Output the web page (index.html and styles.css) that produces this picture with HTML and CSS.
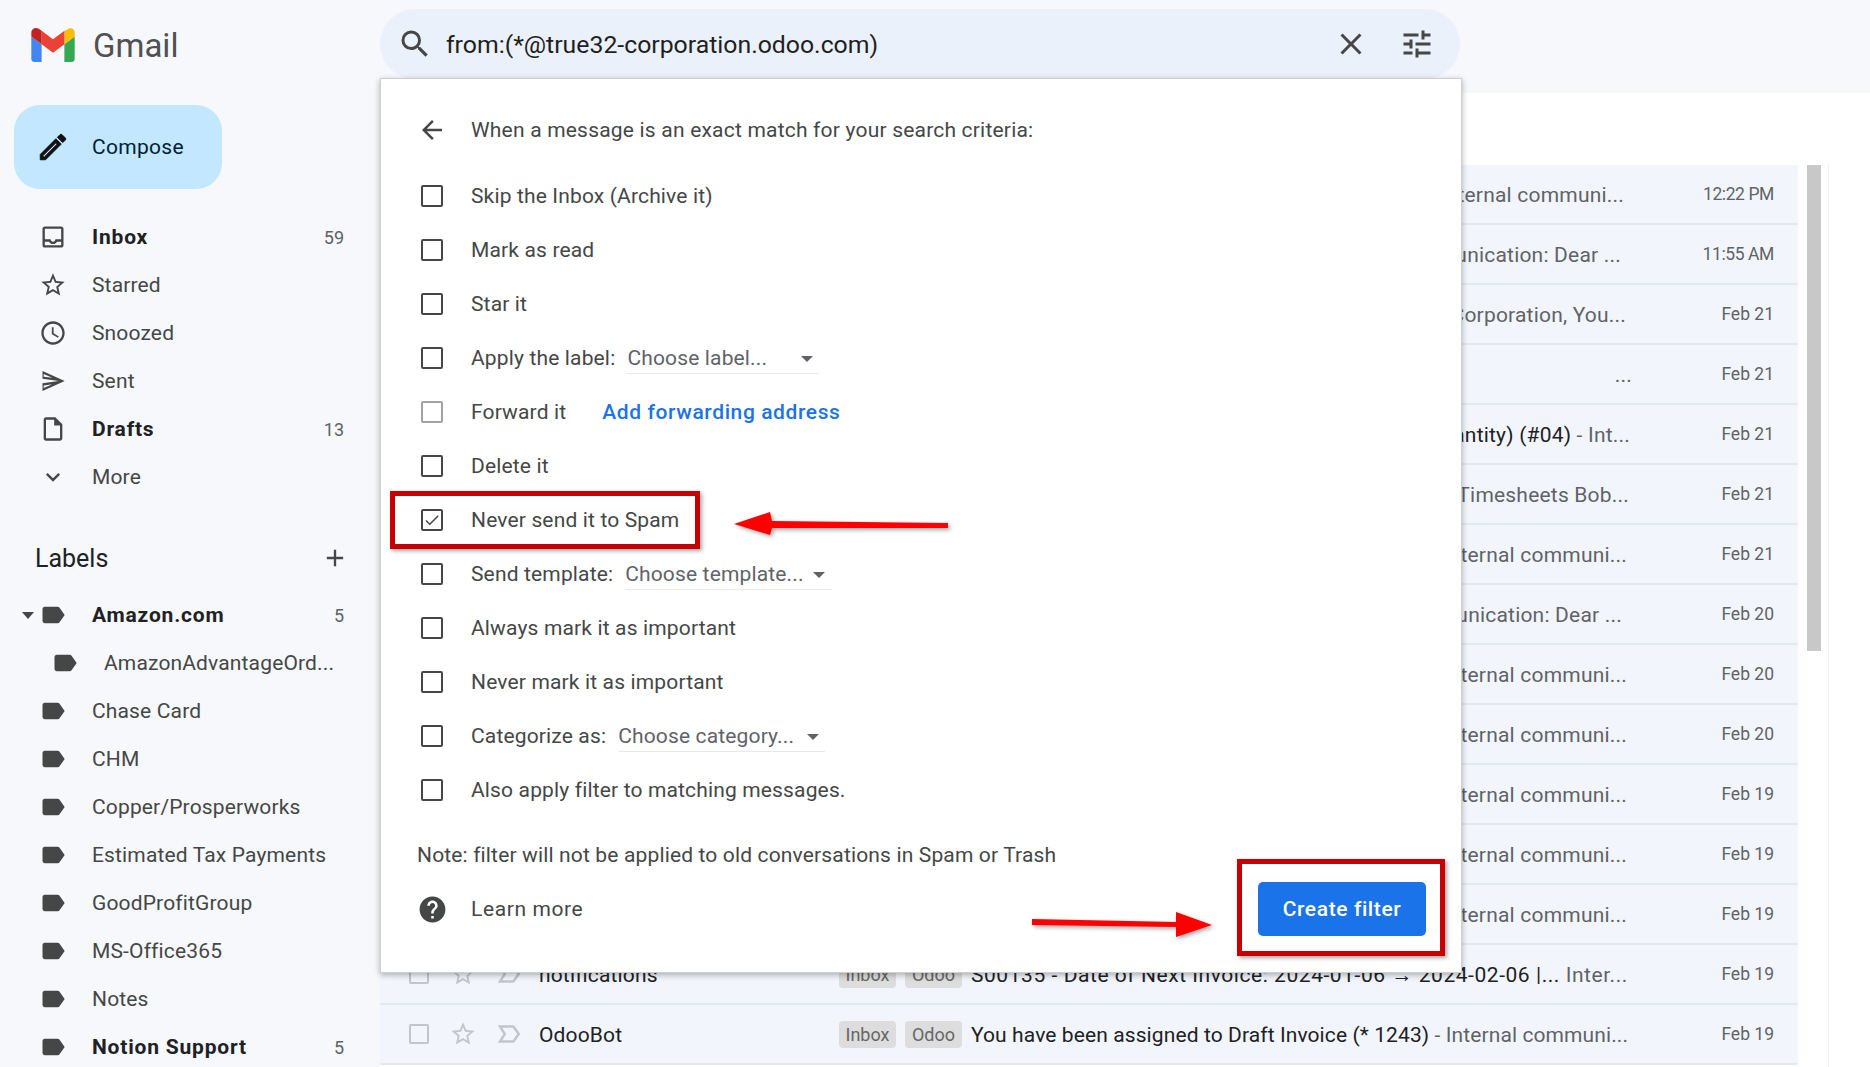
FILE: index.html
```html
<!DOCTYPE html>
<html lang="en">
<head>
  <meta charset="UTF-8">
  <title>Gmail - Create filter</title>
  <link rel="stylesheet" href="styles.css">
</head>
<body>
  <svg class="sprite" aria-hidden="true">
    <symbol id="i-search" viewBox="0 0 24 24"><path d="M15.5 14h-.79l-.28-.27A6.471 6.471 0 0 0 16 9.5 6.5 6.5 0 1 0 9.5 16c1.61 0 3.09-.59 4.23-1.57l.27.28v.79l5 4.99L20.49 19l-4.99-5zm-6 0C7.01 14 5 11.99 5 9.5S7.01 5 9.5 5 14 7.01 14 9.5 11.99 14 9.5 14z"/></symbol>
    <symbol id="i-close" viewBox="0 0 24 24"><path d="M19 6.41 17.59 5 12 10.59 6.41 5 5 6.41 10.59 12 5 17.59 6.41 19 12 13.41 17.59 19 19 17.59 13.41 12z"/></symbol>
    <symbol id="i-tune" viewBox="0 0 24 24"><path d="M3 17v2h6v-2H3zM3 5v2h10V5H3zm10 16v-2h8v-2h-8v-2h-2v6h2zM7 9v2H3v2h4v2h2V9H7zm14 4v-2H11v2h10zm-6-4h2V7h4V5h-4V3h-2v6z"/></symbol>
    <symbol id="i-back" viewBox="0 0 24 24"><path d="M20 11H7.83l5.59-5.59L12 4l-8 8 8 8 1.41-1.41L7.83 13H20v-2z"/></symbol>
    <symbol id="i-edit" viewBox="0 0 24 24"><path d="M3 17.25V21h3.75L17.81 9.94l-3.75-3.75L3 17.25zM5.92 19H5v-.92l9.06-9.06.92.92L5.92 19zM20.71 7.04a1 1 0 0 0 0-1.41l-2.34-2.34a1 1 0 0 0-1.41 0l-1.83 1.83 3.75 3.75 1.83-1.83z"/></symbol>
    <symbol id="i-inbox" viewBox="0 0 24 24"><path d="M19 3H5c-1.1 0-2 .9-2 2v14c0 1.1.9 2 2 2h14c1.1 0 2-.9 2-2V5c0-1.1-.9-2-2-2zm0 16H5v-3h3.56c.69 1.19 1.97 2 3.45 2s2.75-.81 3.45-2H19v3zm0-5h-4.99c0 1.1-.9 2-2 2s-2-.9-2-2H5V5h14v9z"/></symbol>
    <symbol id="i-star" viewBox="0 0 24 24"><path d="M22 9.24l-7.19-.62L12 2 9.19 8.63 2 9.24l5.46 4.73L5.82 21 12 17.27 18.18 21l-1.63-7.03L22 9.24zM12 15.4l-3.76 2.27 1-4.28-3.32-2.88 4.38-.38L12 6.1l1.71 4.04 4.38.38-3.32 2.88 1 4.28L12 15.4z"/></symbol>
    <symbol id="i-clock" viewBox="0 0 24 24"><path d="M11.99 2C6.47 2 2 6.48 2 12s4.47 10 9.99 10C17.52 22 22 17.52 22 12S17.52 2 11.99 2zM12 20c-4.42 0-8-3.58-8-8s3.58-8 8-8 8 3.58 8 8-3.58 8-8 8zm.5-13H11v6l5.25 3.15.75-1.23-4.5-2.67z"/></symbol>
    <symbol id="i-sent" viewBox="0 0 24 24"><path d="M4 6.03l7.51 3.22-7.52-1 .01-2.22m7.5 8.72L4 17.97v-2.22l7.51-1M3 3.5V10l14 2-14 2v6.5L22 12 3 3.5z"/></symbol>
    <symbol id="i-draft" viewBox="0 0 24 24"><path d="M14 2H6c-1.1 0-1.99.9-1.99 2L4 20c0 1.1.89 2 1.99 2H18c1.1 0 2-.9 2-2V8l-6-6zm4 18H6V4h7v5h5v11z"/></symbol>
    <symbol id="i-more" viewBox="0 0 24 24"><path d="M16.59 8.59 12 13.17 7.41 8.59 6 10l6 6 6-6z"/></symbol>
    <symbol id="i-label" viewBox="0 0 24 24"><path d="M17.63 5.84C17.27 5.33 16.67 5 16 5L5 5.01C3.9 5.01 3 5.9 3 7v10c0 1.1.9 1.99 2 1.99L16 19c.67 0 1.27-.33 1.63-.84L22 12l-4.37-6.16z"/></symbol>
    <symbol id="i-add" viewBox="0 0 24 24"><path d="M19 13h-6v6h-2v-6H5v-2h6V5h2v6h6v2z"/></symbol>
    <symbol id="i-help" viewBox="0 0 24 24"><path d="M12 2C6.48 2 2 6.48 2 12s4.48 10 10 10 10-4.48 10-10S17.52 2 12 2zm1 17h-2v-2h2v2zm2.07-7.75l-.9.92C13.45 12.9 13 13.5 13 15h-2v-.5c0-1.1.45-2.1 1.17-2.83l1.24-1.26c.37-.36.59-.86.59-1.41 0-1.1-.9-2-2-2s-2 .9-2 2H8c0-2.21 1.79-4 4-4s4 1.79 4 4c0 .88-.36 1.68-.93 2.25z"/></symbol>
    <symbol id="i-important" viewBox="0 0 24 24"><path d="M15 19H3l4.5-7L3 5h12c.65 0 1.26.31 1.63.84L21 12l-4.37 6.16c-.37.52-.98.84-1.63.84zm-8.39-2H15l3.55-5L15 7H6.61l3.21 5-3.21 5z"/></symbol>
  </svg>

  <div class="app">
    <aside class="sidebar">
      <div class="brand">
        <svg class="brand-logo" viewBox="0 0 52 42">
          <path fill="#4285f4" d="M3.636 42h8.727V20.727L0 11.455v26.909C0 40.375 1.627 42 3.636 42z"/>
          <path fill="#34a853" d="M39.636 42h8.727c2.012 0 3.636-1.63 3.636-3.636V11.455l-12.364 9.273z"/>
          <path fill="#fbbc04" d="M39.636 4.636v16.09L52 11.456V6.545c0-4.5-5.14-7.07-8.727-3.373z"/>
          <path fill="#ea4335" d="M12.364 20.727V4.636L26 14.818l13.636-10.18v16.09L26 30.909z"/>
          <path fill="#c5221f" d="M0 6.545v4.91l12.364 9.272V4.636L8.91 2.182C5.31-.518 0 2.05 0 6.545"/>
        </svg>
        <span class="brand-name">Gmail</span>
      </div>

      <button class="compose"><svg class="icon"><use href="#i-edit"/></svg>Compose</button>

      <ul class="nav">
        <li class="nav-item bold"><svg class="icon"><use href="#i-inbox"/></svg><span class="nav-name">Inbox</span><span class="count">59</span></li>
        <li class="nav-item"><svg class="icon"><use href="#i-star"/></svg><span class="nav-name">Starred</span></li>
        <li class="nav-item"><svg class="icon"><use href="#i-clock"/></svg><span class="nav-name">Snoozed</span></li>
        <li class="nav-item"><svg class="icon"><use href="#i-sent"/></svg><span class="nav-name">Sent</span></li>
        <li class="nav-item bold"><svg class="icon"><use href="#i-draft"/></svg><span class="nav-name">Drafts</span><span class="count">13</span></li>
        <li class="nav-item"><svg class="icon"><use href="#i-more"/></svg><span class="nav-name">More</span></li>
      </ul>

      <div class="labels-head"><span>Labels</span><svg class="icon"><use href="#i-add"/></svg></div>

      <ul class="nav">
        <li class="nav-item bold caret"><svg class="icon"><use href="#i-label"/></svg><span class="nav-name">Amazon.com</span><span class="count">5</span></li>
        <li class="nav-item sub"><svg class="icon"><use href="#i-label"/></svg><span class="nav-name">AmazonAdvantageOrd...</span></li>
        <li class="nav-item"><svg class="icon"><use href="#i-label"/></svg><span class="nav-name">Chase Card</span></li>
        <li class="nav-item"><svg class="icon"><use href="#i-label"/></svg><span class="nav-name">CHM</span></li>
        <li class="nav-item"><svg class="icon"><use href="#i-label"/></svg><span class="nav-name">Copper/Prosperworks</span></li>
        <li class="nav-item"><svg class="icon"><use href="#i-label"/></svg><span class="nav-name">Estimated Tax Payments</span></li>
        <li class="nav-item"><svg class="icon"><use href="#i-label"/></svg><span class="nav-name">GoodProfitGroup</span></li>
        <li class="nav-item"><svg class="icon"><use href="#i-label"/></svg><span class="nav-name">MS-Office365</span></li>
        <li class="nav-item"><svg class="icon"><use href="#i-label"/></svg><span class="nav-name">Notes</span></li>
        <li class="nav-item bold"><svg class="icon"><use href="#i-label"/></svg><span class="nav-name">Notion Support</span><span class="count">5</span></li>
      </ul>
    </aside>

    <main class="main">
      <header class="topbar">
        <div class="search">
          <svg class="search-icon"><use href="#i-search"/></svg>
          <span class="search-text">from:(*@true32-corporation.odoo.com)</span>
          <svg class="clear-icon"><use href="#i-close"/></svg>
          <svg class="tune-icon"><use href="#i-tune"/></svg>
        </div>
      </header>

      <div class="content">
        <div class="list">
          <div class="mail"><div class="snippet">Internal communi...</div><div class="date time">12:22 PM</div></div>
          <div class="mail"><div class="snippet">Internal communication: Dear ...</div><div class="date time">11:55 AM</div></div>
          <div class="mail"><div class="snippet">True32 Corporation, You...</div><div class="date">Feb 21</div></div>
          <div class="mail"><div class="snippet">...</div><div class="date">Feb 21</div></div>
          <div class="mail"><div class="snippet"><span class="subject">Quantity) (#04)</span> - Int...</div><div class="date">Feb 21</div></div>
          <div class="mail"><div class="snippet">Timesheets Bob...</div><div class="date">Feb 21</div></div>
          <div class="mail"><div class="snippet">Internal communi...</div><div class="date">Feb 21</div></div>
          <div class="mail"><div class="snippet">Internal communication: Dear ...</div><div class="date">Feb 20</div></div>
          <div class="mail"><div class="snippet">Internal communi...</div><div class="date">Feb 20</div></div>
          <div class="mail"><div class="snippet">Internal communi...</div><div class="date">Feb 20</div></div>
          <div class="mail"><div class="snippet">Internal communi...</div><div class="date">Feb 19</div></div>
          <div class="mail"><div class="snippet">Internal communi...</div><div class="date">Feb 19</div></div>
          <div class="mail"><div class="snippet">Internal communi...</div><div class="date">Feb 19</div></div>
          <div class="mail full">
            <span class="mail-check"></span>
            <svg class="mail-star"><use href="#i-star"/></svg>
            <svg class="mail-imp"><use href="#i-important"/></svg>
            <span class="sender">notifications</span>
            <span class="chip">Inbox</span><span class="chip">Odoo</span>
            <div class="line wide"><span class="subject">S00135 - Date of Next Invoice: 2024-01-06 → 2024-02-06 |...</span> Inter...</div>
            <div class="date">Feb 19</div>
          </div>
          <div class="mail full">
            <span class="mail-check"></span>
            <svg class="mail-star"><use href="#i-star"/></svg>
            <svg class="mail-imp"><use href="#i-important"/></svg>
            <span class="sender">OdooBot</span>
            <span class="chip">Inbox</span><span class="chip">Odoo</span>
            <div class="line"><span class="subject">You have been assigned to Draft Invoice (* 1243)</span> - Internal communi...</div>
            <div class="date">Feb 19</div>
          </div>
        </div>
        <div class="scroll"><div class="scroll-thumb"></div></div>
      </div>
    </main>
  </div>

  <div class="dialog">
    <div class="dialog-head"><svg class="back"><use href="#i-back"/></svg>When a message is an exact match for your search criteria:</div>
    <div class="options">
      <div class="opt"><span class="check"></span>Skip the Inbox (Archive it)</div>
      <div class="opt"><span class="check"></span>Mark as read</div>
      <div class="opt"><span class="check"></span>Star it</div>
      <div class="opt"><span class="check"></span>Apply the label:<span class="pick pick-label">Choose label...</span></div>
      <div class="opt"><span class="check off"></span>Forward it<a class="link">Add forwarding address</a></div>
      <div class="opt"><span class="check"></span>Delete it</div>
      <div class="opt"><span class="check"><svg viewBox="0 0 24 24"><path d="M9 16.2 4.8 12l-1.4 1.4L9 19 21 7l-1.4-1.4z"/></svg></span>Never send it to Spam</div>
      <div class="opt"><span class="check"></span>Send template:<span class="pick pick-template">Choose template...</span></div>
      <div class="opt"><span class="check"></span>Always mark it as important</div>
      <div class="opt"><span class="check"></span>Never mark it as important</div>
      <div class="opt"><span class="check"></span>Categorize as:<span class="pick pick-category">Choose category...</span></div>
      <div class="opt"><span class="check"></span>Also apply filter to matching messages.</div>
    </div>
    <div class="note">Note: filter will not be applied to old conversations in Spam or Trash</div>
    <div class="dialog-foot">
      <svg class="help"><use href="#i-help"/></svg>
      <span class="learn">Learn more</span>
      <button class="create">Create filter</button>
    </div>
  </div>

  <!-- red annotations drawn on top of the screenshot -->
  <div class="mark mark-spam"></div>
  <div class="mark mark-create"></div>
  <svg class="arrow arrow-left" viewBox="0 0 220 30"><path d="M0 14 36 2 38 11 214 13 214 18 38 18 36 25z"/></svg>
  <svg class="arrow arrow-right" viewBox="0 0 184 30"><path d="M0 7 144 10 144 0 180 13 144 25 144 15 0 13z"/></svg>
</body>
</html>
```

FILE: styles.css
```css
* { box-sizing: border-box; }
html, body { margin: 0; height: 100%; overflow: hidden; }
body { font-family: Roboto, "Liberation Sans", sans-serif; font-size: 21px; letter-spacing: .15px; color: #444746; background: #f6f8fc; }
ul { list-style: none; margin: 0; padding: 0; }
.sprite { display: none; }
.icon { width: 28px; height: 28px; fill: #444746; flex: none; }

.app { display: flex; height: 1067px; }

/* sidebar */
.sidebar { width: 380px; flex: none; padding-left: 14px; overflow: hidden; }
.brand { display: flex; align-items: center; height: 90px; padding-left: 17px; padding-bottom: 2px; }
.brand-name { margin-left: 18px; padding-top: 2px; font-size: 33px; letter-spacing: 0; color: #4f5154; }
.brand-logo { width: 44px; height: 35px; }
.compose { display: flex; align-items: center; width: 208px; height: 84px; margin-top: 15px; padding: 0 0 0 22px; border: 0; border-radius: 26px; background: #c2e7ff; font: inherit; letter-spacing: .3px; color: #001d35; }
.compose .icon { width: 34px; height: 34px; fill: #111; stroke: #111; stroke-width: .7; margin-right: 22px; }
.compose + .nav { margin-top: 24px; }
.nav-item { display: flex; align-items: center; height: 48px; padding-left: 25px; padding-right: 36px; position: relative; }
.nav-name { margin-left: 25px; flex: 1; white-space: nowrap; }
.bold .nav-name { font-weight: 700; letter-spacing: .8px; color: #202124; }
.count { font-size: 18px; letter-spacing: 0; color: #5f6368; }
.nav-item.sub { padding-left: 37px; }
.nav-item.caret::before { content: ""; position: absolute; left: 8px; top: 21px; border: 6px solid transparent; border-top: 7px solid #444746; border-bottom: 0; }
.labels-head { display: flex; align-items: center; justify-content: space-between; height: 48px; margin-top: 33px; margin-bottom: 9px; padding: 0 31px 0 21px; font-size: 25px; letter-spacing: 0; color: #202124; }

/* main column */
.main { flex: 1; display: flex; flex-direction: column; min-width: 0; }
.topbar { height: 93px; flex: none; padding-top: 9px; }
.search { display: flex; align-items: center; width: 1080px; height: 70px; padding: 0 25px 0 17px; border-radius: 35px; background: #eaf1fb; }
.search-icon { width: 36px; height: 36px; fill: #444746; flex: none; }
.search-text { margin-left: 13px; flex: 1; padding-top: 1px; font-size: 24.8px; letter-spacing: 0; color: #1f1f1f; }
.clear-icon { width: 36px; height: 36px; fill: #444746; margin-right: 30px; }
.tune-icon { width: 36px; height: 36px; fill: #444746; }
.content { flex: 1; display: flex; background: #fff; padding-top: 72px; }
.list { width: 1418px; flex: none; }
.scroll { width: 22px; margin-left: 9px; height: 902px; border-right: 1px solid #eceff3; }
.scroll-thumb { width: 14px; height: 486px; background: #c8c8c8; }

/* mail rows, only the part past the dialog shows for most of them */
.mail { display: flex; align-items: center; height: 60px; background: #f2f6fc; border-bottom: 2px solid #e4e8ef; color: #5f6368; }
.snippet { flex: 1; padding-top: 2px; padding-right: 41px; text-align: right; white-space: nowrap; letter-spacing: .2px; }
.mail:nth-child(1) .snippet { padding-right: 44px; }
.mail:nth-child(2) .snippet { padding-right: 47px; }
.mail:nth-child(3) .snippet { padding-right: 42px; }
.mail:nth-child(4) .snippet { padding-right: 36px; }
.mail:nth-child(5) .snippet { padding-right: 38px; }
.mail:nth-child(6) .snippet { padding-right: 39px; }
.mail:nth-child(8) .snippet { padding-right: 46px; }
.subject { color: #202124; }
.date { width: 130px; flex: none; padding-right: 24px; text-align: right; font-size: 17.5px; letter-spacing: 0; color: #5f6368; white-space: nowrap; }
.date.time { letter-spacing: -.4px; }
.mail-check { width: 20px; height: 20px; margin-left: 29px; border: 2px solid #c2c5ca; border-radius: 2px; flex: none; }
.mail-star { width: 28px; height: 28px; margin-left: 20px; fill: #c2c5ca; flex: none; }
.mail-imp { width: 30px; height: 30px; margin-left: 17px; fill: #c2c5ca; flex: none; }
.sender { width: 300px; margin-left: 15px; padding-top: 2px; color: #202124; flex: none; }
.chip { display: flex; align-items: center; justify-content: center; height: 27px; width: 57px; margin-right: 9px; border-radius: 4px; background: #dddddd; font-size: 18px; letter-spacing: 0; color: #666; flex: none; }
.line { flex: 1; padding-top: 2px; white-space: nowrap; overflow: hidden; letter-spacing: .1px; }
.line.wide { letter-spacing: .55px; }

/* filter dialog */
.dialog { position: absolute; left: 380px; top: 78px; width: 1082px; padding: 24px 35px 36px 36px; background: #fff; border: 1px solid #cfcfcf; box-shadow: 0 2px 6px rgba(0, 0, 0, .3); color: #444746; }
.dialog-head { display: flex; align-items: center; height: 54px; padding-left: 4px; letter-spacing: .2px; }
.back { width: 30px; height: 30px; margin-left: -4px; margin-right: 24px; fill: #444746; }
.options { margin-top: 12px; }
.opt { display: flex; align-items: center; height: 54px; padding-left: 4px; white-space: nowrap; }
.check { display: flex; width: 22px; height: 22px; margin-right: 28px; border: 2px solid #444746; border-radius: 2px; flex: none; }
.check svg { width: 18px; height: 18px; fill: #444746; }
.check.off { border-color: #a3a3a3; }
.link { margin-left: 36px; color: #1a73e8; font-weight: 500; letter-spacing: .6px; }
.pick { position: relative; display: block; margin-left: 12px; padding: 4px 0 3px; border-bottom: 1px solid #e6e9ed; color: #5f6368; }
.pick::after { content: ""; position: absolute; top: 14px; border: 6px solid transparent; border-top: 6px solid #5f6368; border-bottom: 0; }
.pick-label { width: 192px; }
.pick-label::after { right: 6px; }
.pick-template { width: 207px; }
.pick-template::after { right: 7px; }
.pick-category { width: 207px; }
.pick-category::after { right: 6px; }
.note { display: flex; align-items: center; height: 54px; margin-top: 11px; }
.dialog-foot { display: flex; align-items: center; height: 54px; }
.learn { letter-spacing: .6px; }
.help { width: 31px; height: 31px; margin-right: 23px; fill: #444746; flex: none; }
.create { width: 168px; height: 54px; margin-left: auto; border: 0; border-radius: 5px; background: #1a73e8; color: #fff; font: inherit; font-weight: 500; letter-spacing: .6px; }

/* annotations */
.mark { position: absolute; border: 5px solid #c80000; box-shadow: 2px 2px 4px rgba(0, 0, 0, .35); }
.mark-spam { left: 390px; top: 491px; width: 310px; height: 58px; }
.mark-create { left: 1237px; top: 859px; width: 208px; height: 97px; }
.arrow { position: absolute; fill: #ff0000; filter: drop-shadow(2px 2px 2px rgba(0, 0, 0, .35)); }
.arrow-left { left: 734px; top: 510px; width: 220px; height: 30px; }
.arrow-right { left: 1032px; top: 912px; width: 184px; height: 30px; }
```
